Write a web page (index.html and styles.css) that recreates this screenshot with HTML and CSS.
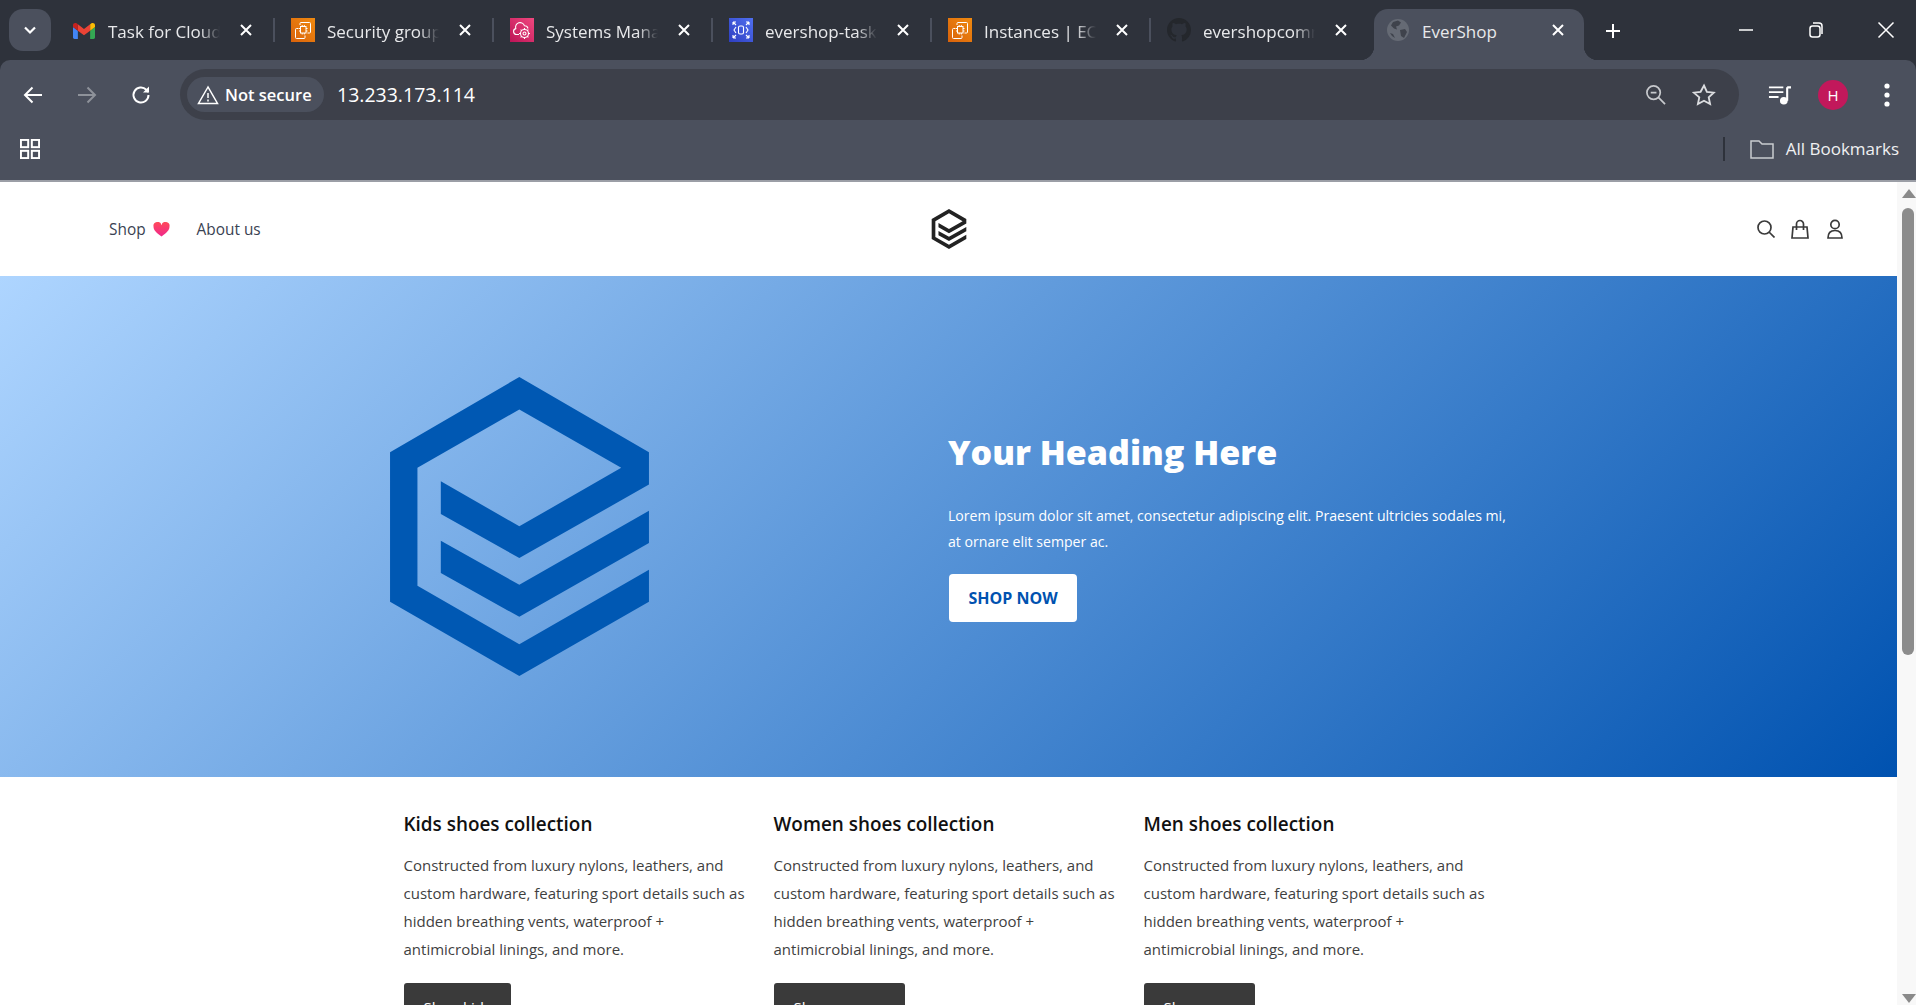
FILE: index.html
```html
<!DOCTYPE html>
<html lang="en">
<head>
    <meta charset="UTF-8" />
    <title>EverShop</title>
    <link rel="stylesheet" href="styles.css">
</head>
<body>

<header class="browser">
    <div class="tabstrip">
        <button class="tab-search">
            <svg width="14" height="14" viewBox="0 0 14 14"><path d="M2 4.500l5 5 5-5" fill="none" stroke="#fff" stroke-width="2.200"/></svg>
        </button>
        <div class="tabs">
            <div class="tab">
                <svg class="favicon gmail" viewBox="0 0 52 42"><path fill="#4285f4" d="M3.500 42h8V22.500L0 14v24.500C0 40.400 1.600 42 3.500 42z"/><path fill="#34a853" d="M40.500 42h8c1.900 0 3.500-1.600 3.500-3.500V14l-11.500 8.500"/><path fill="#fbbc04" d="M40.500 7.500v15L52 14V9.500c0-4.300-4.900-6.800-8.400-4.200"/><path fill="#ea4335" d="M11.500 22.500v-15L26 18.400 40.500 7.500v15L26 33.400"/><path fill="#c5221f" d="M0 9.500V14l11.500 8.500v-15L8.400 5.300C4.900 2.700 0 5.200 0 9.500z"/></svg>
                <span class="tab-title">Task for Cloud Engineer</span>
                <svg class="tab-close" viewBox="0 0 12 12"><path d="M1 1l10 10M11 1L1 11" stroke="#fff" stroke-width="2"/></svg>
            </div>
            <div class="tab">
                <span class="favicon aws-orange"><svg viewBox="0 0 24 24" fill="none" stroke="#fff" stroke-width="1"><path d="M9 7V5.500a1 1 0 0 1 1-1h8.500a1 1 0 0 1 1 1V14a1 1 0 0 1-1 1H16.500M7.500 10.500H5.500a1 1 0 0 0-1 1V19.500a1 1 0 0 0 1 1H13a1 1 0 0 0 1-1V17.500"/><rect x="9.500" y="8.500" width="5.500" height="6.500"/><path d="M11.200 7v1.500M13.300 7v1.500M11.200 15v1.500M13.300 15v1.500M8 10.500h1.500M8 13h1.500M15 10.500h1.500M15 13h1.500"/></svg></span>
                <span class="tab-title">Security groups | EC2</span>
                <svg class="tab-close" viewBox="0 0 12 12"><path d="M1 1l10 10M11 1L1 11" stroke="#fff" stroke-width="2"/></svg>
            </div>
            <div class="tab">
                <span class="favicon aws-pink"><svg viewBox="0 0 24 24" fill="none" stroke="#fff" stroke-width="1.100"><path d="M9 16.500H6.500a3 3 0 0 1-.7-5.900 4.500 4.500 0 0 1 8.700-2.800 3.500 3.500 0 0 1 3.500 2.700"/><circle cx="14.500" cy="15.500" r="4"/><circle cx="14.500" cy="15.500" r="1.500"/><path d="M14.500 10v1.500M14.500 19.500V21M9 15.500h1.500M18.500 15.500H20M10.600 11.600l1.100 1.100M17.300 18.300l1.100 1.100M18.400 11.600l-1.100 1.100M11.700 18.300l-1.100 1.100"/></svg></span>
                <span class="tab-title">Systems Manager</span>
                <svg class="tab-close" viewBox="0 0 12 12"><path d="M1 1l10 10M11 1L1 11" stroke="#fff" stroke-width="2"/></svg>
            </div>
            <div class="tab">
                <span class="favicon aws-blue"><svg viewBox="0 0 24 24" fill="none" stroke="#fff" stroke-width="1.100"><rect x="9.500" y="8" width="5" height="8" rx="1.500"/><path d="M7 9l-2 3 2 3M17 9l2 3-2 3M4 4h3M4 4v3M4 4l3 3M20 4h-3M20 4v3M20 4l-3 3M4 20h3M4 20v-3M4 20l3-3M20 20h-3M20 20v-3M20 20l-3-3"/></svg></span>
                <span class="tab-title">evershop-task-cluster</span>
                <svg class="tab-close" viewBox="0 0 12 12"><path d="M1 1l10 10M11 1L1 11" stroke="#fff" stroke-width="2"/></svg>
            </div>
            <div class="tab">
                <span class="favicon aws-orange"><svg viewBox="0 0 24 24" fill="none" stroke="#fff" stroke-width="1"><path d="M9 7V5.500a1 1 0 0 1 1-1h8.500a1 1 0 0 1 1 1V14a1 1 0 0 1-1 1H16.500M7.500 10.500H5.500a1 1 0 0 0-1 1V19.500a1 1 0 0 0 1 1H13a1 1 0 0 0 1-1V17.500"/><rect x="9.500" y="8.500" width="5.500" height="6.500"/><path d="M11.200 7v1.500M13.300 7v1.500M11.200 15v1.500M13.300 15v1.500M8 10.500h1.500M8 13h1.500M15 10.500h1.500M15 13h1.500"/></svg></span>
                <span class="tab-title">Instances | EC2 Console</span>
                <svg class="tab-close" viewBox="0 0 12 12"><path d="M1 1l10 10M11 1L1 11" stroke="#fff" stroke-width="2"/></svg>
            </div>
            <div class="tab no-sep">
                <svg class="favicon" viewBox="0 0 16 16"><path fill="#24272c" d="M8 0C3.580 0 0 3.580 0 8c0 3.540 2.290 6.530 5.470 7.590.4.070.55-.17.55-.38 0-.19-.01-.82-.01-1.490-2.010.37-2.530-.49-2.690-.94-.09-.23-.48-.94-.82-1.130-.28-.15-.68-.52-.01-.53.63-.01 1.080.58 1.230.82.720 1.210 1.870.87 2.330.66.070-.52.28-.87.510-1.070-1.780-.2-3.640-.89-3.640-3.950 0-.87.310-1.590.820-2.150-.08-.2-.36-1.020.08-2.120 0 0 .67-.21 2.200.82.640-.18 1.320-.27 2-.27s1.360.09 2 .27c1.530-1.040 2.200-.82 2.200-.82.440 1.100.16 1.920.08 2.120.51.560.82 1.270.82 2.150 0 3.070-1.870 3.750-3.650 3.950.29.250.54.730.54 1.480 0 1.070-.01 1.930-.01 2.200 0 .210.15.460.55.380A8.010 8.010 0 0 0 16 8c0-4.420-3.580-8-8-8z"/></svg>
                <span class="tab-title">evershopcommerce</span>
                <svg class="tab-close" viewBox="0 0 12 12"><path d="M1 1l10 10M11 1L1 11" stroke="#fff" stroke-width="2"/></svg>
            </div>
            <div class="tab active">
                <svg class="favicon globe" viewBox="0 0 22 22"><circle cx="11" cy="11" r="11" fill="#656a74"/><path fill="#3f434c" d="M6 3l5-1.500 3 2-2 3-3 1 1 3-3-1-3-3zM13 11l5-1 2 3-3 6-3-2zM3 14l3 1 2 4-3-2z"/></svg>
                <span class="tab-title">EverShop</span>
                <svg class="tab-close" viewBox="0 0 12 12"><path d="M1 1l10 10M11 1L1 11" stroke="#fff" stroke-width="2"/></svg>
            </div>
        </div>
        <button class="new-tab">
            <svg width="16" height="16" viewBox="0 0 16 16"><path d="M8 1v14M1 8h14" stroke="#fff" stroke-width="2"/></svg>
        </button>
        <div class="window-controls">
            <svg class="win-btn" viewBox="0 0 60 20"><path d="M23 10h14" stroke="#fff" stroke-width="1.500"/></svg>
            <svg class="win-btn" viewBox="0 0 60 20" fill="none" stroke="#fff" stroke-width="1.500"><rect x="24" y="6" width="10" height="11" rx="2.500"/><path d="M27 3h6a3 3 0 0 1 3 3v8"/></svg>
            <svg class="win-btn" viewBox="0 0 60 20"><path d="M22.500 2.500l15 15M37.500 2.500l-15 15" stroke="#fff" stroke-width="1.500"/></svg>
        </div>
    </div>

    <div class="toolbar">
        <div class="nav-row">
            <svg class="tool back" viewBox="0 0 22 22" fill="none" stroke="#fff" stroke-width="2"><path d="M20 11H3M10.500 3.500L3 11l7.500 7.500"/></svg>
            <svg class="tool forward" viewBox="0 0 22 22" fill="none" stroke="#8e929a" stroke-width="2"><path d="M2 11h17M11.500 3.500L19 11l-7.500 7.500"/></svg>
            <svg class="tool reload" viewBox="0 0 22 22" fill="none" stroke="#fff" stroke-width="2"><path d="M18.500 11a7.500 7.500 0 1 1-2.200-5.300L18.500 8"/><path d="M19 2.500V8.500H13" fill="#fff" stroke="none"/></svg>
            <div class="omnibox">
                <div class="security-chip">
                    <svg width="22" height="20" viewBox="0 0 22 20" fill="none" stroke="#fff" stroke-width="1.500"><path d="M11 2L1.500 18.500h19z"/><path d="M11 8v5M11 14.500v2"/></svg>
                    <span>Not secure</span>
                </div>
                <span class="url">13.233.173.114</span>
                <svg class="omni-icon" viewBox="0 0 22 22" fill="none" stroke="#c7c9cd" stroke-width="1.800"><circle cx="9" cy="9" r="7"/><path d="M14 14l7 7M6 9h6"/></svg>
                <svg class="omni-icon star" viewBox="0 0 24 24" fill="none" stroke="#dcdde0" stroke-width="1.800"><path d="M12 2.500l2.900 6.300 6.900.8-5.100 4.700 1.400 6.800-6.100-3.400-6.100 3.400 1.400-6.800L1.700 9.600l6.900-.8z"/></svg>
            </div>
            <svg class="media-icon" viewBox="0 0 24 22"><path d="M1 3h15M1 8h15M1 13h10" stroke="#fff" stroke-width="2"/><path d="M20 3h4M20 3v14" stroke="#fff" stroke-width="2.200" fill="none"/><circle cx="16.500" cy="17" r="4" fill="#fff"/></svg>
            <div class="avatar">H</div>
            <svg class="more" viewBox="0 0 6 26"><circle cx="3" cy="4" r="2.600" fill="#fff"/><circle cx="3" cy="13" r="2.600" fill="#fff"/><circle cx="3" cy="22" r="2.600" fill="#fff"/></svg>
        </div>
        <div class="bookmarks-row">
            <svg class="apps" viewBox="0 0 22 22" fill="none" stroke="#fff" stroke-width="2.200"><rect x="1" y="1" width="8" height="8"/><rect x="13" y="1" width="8" height="8"/><rect x="1" y="13" width="8" height="8"/><rect x="13" y="13" width="8" height="8"/></svg>
            <span class="bookmark-sep"></span>
            <svg class="folder" viewBox="0 0 24 20" fill="none" stroke="#c9cbcf" stroke-width="1.500"><path d="M1 2h8l3 3h11v14H1z"/></svg>
            <span class="bookmarks-label">All Bookmarks</span>
        </div>
    </div>
</header>

<div class="viewport">
    <main class="page">
        <nav class="site-nav">
            <div class="site-links">
                <a href="#">Shop <svg class="heart" viewBox="0 0 18 16"><defs><linearGradient id="heartFill" x1="0" y1="0" x2="0" y2="1"><stop offset="0" stop-color="#ff4a5a"/><stop offset="1" stop-color="#f0288c"/></linearGradient></defs><path fill="url(#heartFill)" d="M9 15.500C3 11 .5 8.500.5 5A4.300 4.300 0 0 1 9 3.500 4.300 4.300 0 0 1 17.500 5c0 3.500-2.500 6-8.500 10.500z"/></svg></a>
                <a href="#">About us</a>
            </div>
            <svg class="site-logo" viewBox="60 50 775 895"><path fill="#222" d="M447 50L835 275V372L447 592 212 460V362L447 497 752 322 447 147 142 322V675L447 850 835 627V723L447 945 60 723V275ZM212 540L447 672 835 450V547L447 768 212 637Z"/></svg>
            <div class="site-icons">
                <svg class="icon-search" viewBox="0 0 18 18" fill="none" stroke="#3a3a3a" stroke-width="1.700"><circle cx="7.500" cy="7.500" r="6.500"/><path d="M12 12l5.500 5.500"/></svg>
                <svg class="icon-bag" viewBox="0 0 18 20" fill="none" stroke="#3a3a3a" stroke-width="1.700"><path d="M2 8h14l1 11H1z"/><path d="M5.500 11V5a3.500 3.500 0 0 1 7 0v6"/></svg>
                <svg class="icon-user" viewBox="0 0 16 20" fill="none" stroke="#3a3a3a" stroke-width="1.700"><circle cx="8" cy="5.500" r="4.200"/><path d="M1 19c0-5 3-7.500 7-7.500s7 2.500 7 7.500z"/></svg>
            </div>
        </nav>

        <section class="hero">
            <div class="hero-art">
                <svg class="hero-logo" viewBox="60 50 775 895"><path fill="#0058b3" d="M447 50L835 275V372L447 592 212 460V362L447 497 752 322 447 147 142 322V675L447 850 835 627V723L447 945 60 723V275ZM212 540L447 672 835 450V547L447 768 212 637Z"/></svg>
            </div>
            <div class="hero-copy">
                <h1>Your Heading Here</h1>
                <p>Lorem ipsum dolor sit amet, consectetur adipiscing elit. Praesent ultricies sodales mi,<br>at ornare elit semper ac.</p>
                <a class="hero-btn" href="#">SHOP NOW</a>
            </div>
        </section>

        <section class="collections">
            <div class="collection">
                <h3>Kids shoes collection</h3>
                <p>Constructed from luxury nylons, leathers, and<br>custom hardware, featuring sport details such as<br>hidden breathing vents, waterproof +<br>antimicrobial linings, and more.</p>
                <a class="shop-btn" href="#">Shop kids</a>
            </div>
            <div class="collection">
                <h3>Women shoes collection</h3>
                <p>Constructed from luxury nylons, leathers, and<br>custom hardware, featuring sport details such as<br>hidden breathing vents, waterproof +<br>antimicrobial linings, and more.</p>
                <a class="shop-btn" href="#">Shop women</a>
            </div>
            <div class="collection">
                <h3>Men shoes collection</h3>
                <p>Constructed from luxury nylons, leathers, and<br>custom hardware, featuring sport details such as<br>hidden breathing vents, waterproof +<br>antimicrobial linings, and more.</p>
                <a class="shop-btn" href="#">Shop men</a>
            </div>
        </section>
    </main>

    <aside class="scrollbar">
        <span class="arrow-up"></span>
        <span class="thumb"></span>
        <span class="arrow-down"></span>
    </aside>
</div>

</body>
</html>
```

FILE: styles.css
```css
body {
    margin: 0;
    height: 1005px;
    overflow: hidden;
    background-color: #fff;
    font-family: "Open Sans", "Noto Sans", sans-serif;
}

button {
    border: none;
    padding: 0;
}

/* Browser frame */
.browser {
    height: 182px;
    background-color: #2e323b;
}

.tabstrip {
    height: 60px;
    display: flex;
    align-items: flex-start;
}

.tab-search {
    width: 42px;
    height: 42px;
    margin: 9px 0 0 9px;
    border-radius: 14px;
    background-color: #4b505d;
    display: flex;
    align-items: center;
    justify-content: center;
}

.tabs {
    display: flex;
    margin-left: 5px;
    padding-top: 9px;
}

.tab {
    position: relative;
    width: 219px;
    height: 51px;
    box-sizing: border-box;
    padding: 0 0 9px 16px;
    display: flex;
    align-items: center;
    color: #e8e9eb;
}

.tab::after {
    content: "";
    position: absolute;
    right: 0;
    top: 9px;
    width: 2px;
    height: 24px;
    background-color: #4b505d;
}

.tab.no-sep::after {
    display: none;
}

.tab.active {
    width: 210px;
    margin-left: 4px;
    padding-left: 13px;
    background-color: #4b505d;
    border-radius: 14px 14px 0 0;
}

.tab.active::before,
.tab.active::after {
    content: "";
    position: absolute;
    top: auto;
    bottom: 0;
    width: 14px;
    height: 14px;
}

.tab.active::before {
    left: -14px;
    background: radial-gradient(circle at 0 0, transparent 14px, #4b505d 14.500px);
}

.tab.active::after {
    right: -14px;
    background: radial-gradient(circle at 100% 0, transparent 14px, #4b505d 14.500px);
}

.favicon {
    flex: none;
    width: 24px;
    height: 24px;
    margin-right: 12px;
}

.favicon svg {
    display: block;
    width: 24px;
    height: 24px;
}

.gmail {
    width: 22px;
    height: 18px;
    margin-left: 1px;
    margin-right: 13px;
}

.globe {
    width: 22px;
    height: 22px;
    margin-right: 13px;
}

.aws-orange {
    background: linear-gradient(45deg, #d9620b, #f08a10);
}

.aws-pink {
    background: linear-gradient(45deg, #bc1356, #f0487f);
}

.aws-blue {
    background: linear-gradient(45deg, #2e3ec0, #4f6ff0);
}

.tab-title {
    width: 112px;
    margin-top: 2px;
    overflow: hidden;
    white-space: nowrap;
    font-size: 17px;
    -webkit-mask-image: linear-gradient(to right, #000 82%, transparent);
    mask-image: linear-gradient(to right, #000 82%, transparent);
}

.tab.active .tab-title {
    -webkit-mask-image: none;
    mask-image: none;
}

.tab-close {
    position: absolute;
    left: 184px;
    top: 15px;
    width: 12px;
    height: 12px;
}

.tab.active .tab-close {
    left: 178px;
}

.new-tab {
    width: 20px;
    height: 20px;
    margin: 21px 0 0 19px;
    background: none;
    display: flex;
    align-items: center;
    justify-content: center;
}

.window-controls {
    margin-left: auto;
    display: flex;
    gap: 10px;
    padding-top: 20px;
}

.win-btn {
    width: 60px;
    height: 20px;
}

/* Toolbar */
.toolbar {
    height: 122px;
    box-sizing: border-box;
    background-color: #4b505d;
    border-radius: 10px 10px 0 0;
    border-bottom: 2px solid #9b9ea6;
}

.nav-row {
    height: 69px;
    box-sizing: border-box;
    padding: 9px 0 9px 22px;
    display: flex;
    align-items: center;
}

.tool {
    flex: none;
    width: 22px;
    height: 22px;
    margin-right: 32px;
}

.omnibox {
    flex: none;
    width: 1559px;
    height: 51px;
    margin-left: -4px;
    box-sizing: border-box;
    padding: 0 23px 0 7px;
    display: flex;
    align-items: center;
    border-radius: 26px;
    background-color: #3d404a;
}

.security-chip {
    width: 137px;
    height: 35px;
    box-sizing: border-box;
    padding-left: 10px;
    display: flex;
    align-items: center;
    gap: 6px;
    border-radius: 18px;
    background-color: #4b505d;
    color: #fff;
    font-size: 16.500px;
    font-weight: 600;
    white-space: nowrap;
}

.url {
    flex: 1;
    margin-left: 13px;
    color: #fff;
    font-size: 19.500px;
}

.omni-icon {
    width: 21px;
    height: 21px;
}

.omni-icon.star {
    width: 24px;
    height: 24px;
    margin-left: 26px;
}

.media-icon {
    flex: none;
    width: 23px;
    height: 22px;
    margin-left: 29px;
}

.avatar {
    flex: none;
    width: 30px;
    height: 30px;
    margin-left: 27px;
    border-radius: 50%;
    background-color: #c2185b;
    color: #fff;
    font-size: 15px;
    line-height: 30px;
    text-align: center;
}

.more {
    flex: none;
    width: 6px;
    height: 26px;
    margin-left: 36px;
}

.bookmarks-row {
    height: 51px;
    box-sizing: border-box;
    padding: 0 17px 12px 20px;
    display: flex;
    align-items: center;
}

.apps {
    width: 20px;
    height: 20px;
}

.bookmark-sep {
    width: 2px;
    height: 24px;
    margin-left: auto;
    background-color: #2e323b;
}

.folder {
    width: 24px;
    height: 20px;
    margin-left: 25px;
}

.bookmarks-label {
    margin-left: 12px;
    color: #f0f0f2;
    font-size: 17px;
}

/* Page */
.viewport {
    display: flex;
    height: 823px;
    overflow: hidden;
}

.page {
    flex: none;
    width: 1897px;
    color: #222;
}

.site-nav {
    height: 94px;
    box-sizing: border-box;
    padding: 0 54px;
    display: grid;
    grid-template-columns: 1fr auto 1fr;
    align-items: center;
}

.site-links {
    padding-left: 55px;
    display: flex;
    gap: 27px;
    font-size: 15.400px;
}

.site-links a {
    display: flex;
    align-items: center;
    gap: 7px;
    color: #3a4252;
    text-decoration: none;
}

.heart {
    width: 17px;
    height: 15px;
}

.site-logo {
    width: 36px;
    height: 40px;
}

.site-icons {
    display: flex;
    justify-content: flex-end;
    align-items: center;
    gap: 16px;
}

.icon-search {
    width: 18px;
    height: 18px;
}

.icon-bag {
    width: 18px;
    height: 20px;
}

.icon-user {
    width: 16px;
    height: 20px;
    margin-left: 2px;
}

.hero {
    height: 501px;
    display: grid;
    grid-template-columns: 948px 1fr;
    align-items: center;
    background: linear-gradient(135deg, #aed5ff 0%, #0052b0 100%);
}

.hero-art {
    padding-left: 390px;
    display: flex;
}

.hero-logo {
    width: 259px;
    height: 299px;
}

.hero-copy {
    padding-bottom: 4px;
}

.hero-copy h1 {
    margin: 0 0 27px;
    color: #fff;
    font-size: 34px;
    font-weight: 800;
    line-height: 48px;
}

.hero-copy p {
    margin: 0 0 19px;
    color: #fff;
    font-size: 14.100px;
    line-height: 26px;
}

.hero-btn {
    display: inline-block;
    width: 128px;
    height: 48px;
    margin-left: 1px;
    border-radius: 4px;
    background-color: #fff;
    color: #0052b0;
    font-size: 16px;
    font-weight: 700;
    line-height: 48px;
    text-align: center;
    text-decoration: none;
}

.collections {
    padding: 32px 0 0 403.500px;
    display: grid;
    grid-template-columns: 370px 370px 370px;
}

.collection h3 {
    margin: 0 0 12px;
    color: #111;
    font-size: 18.900px;
    font-weight: 600;
    line-height: 30px;
}

.collection p {
    margin: 0 0 20px;
    color: #3f3f3f;
    font-size: 15px;
    line-height: 28px;
}

.shop-btn {
    display: inline-block;
    padding: 0 20px;
    height: 48px;
    line-height: 48px;
    border-radius: 3px;
    background-color: #3a3a3a;
    color: #fff;
    font-size: 15px;
    text-decoration: none;
}

.scrollbar {
    flex: 1;
    position: relative;
    background-color: #f8f8f8;
}

.arrow-up,
.arrow-down {
    position: absolute;
    left: 5px;
    width: 0;
    height: 0;
    border-left: 7px solid transparent;
    border-right: 7px solid transparent;
}

.arrow-up {
    top: 7px;
    border-bottom: 9px solid #8a8a8a;
}

.arrow-down {
    bottom: 2px;
    border-top: 9px solid #8a8a8a;
}

.thumb {
    position: absolute;
    left: 5px;
    top: 26px;
    width: 12px;
    height: 447px;
    border-radius: 6px;
    background-color: #8c8c8c;
}
```
